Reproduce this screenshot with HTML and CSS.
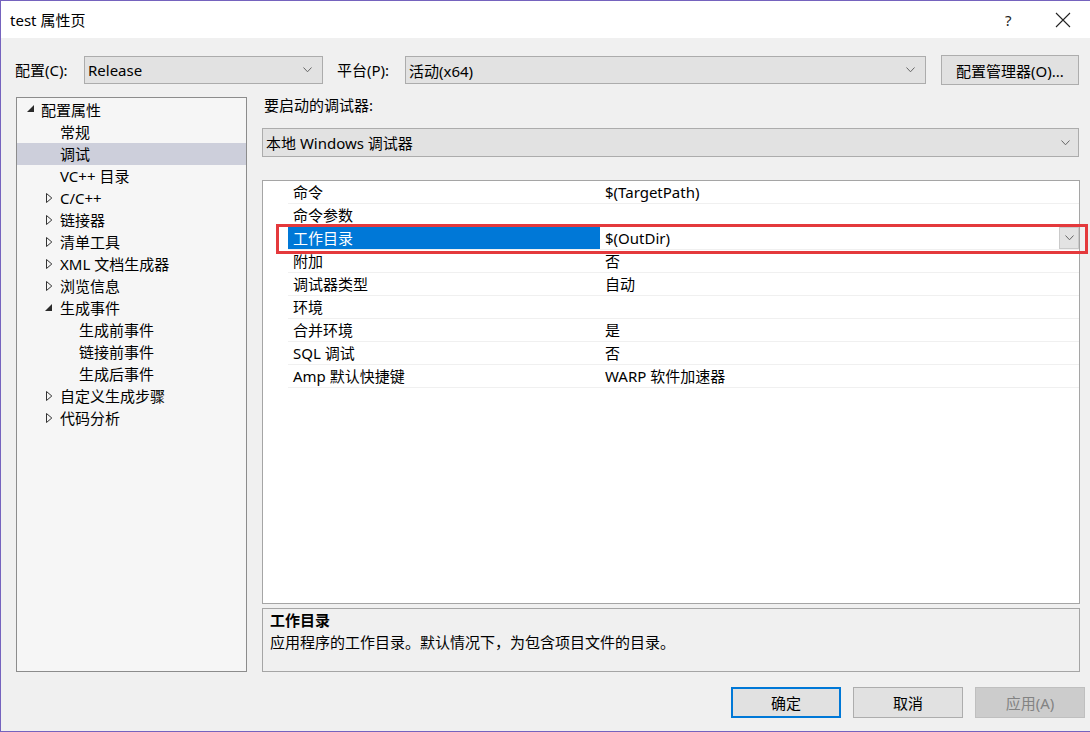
FILE: index.html
```html
<!DOCTYPE html>
<html lang="zh-CN">
<head>
  <meta charset="UTF-8">
  <title>test 属性页</title>
  <link rel="stylesheet" href="styles.css">
</head>
<body>
  <div class="window">
    <div class="titlebar">
      <span class="title">test 属性页</span>
      <span class="help">?</span>
      <span class="close">
        <svg width="16" height="16" viewBox="0 0 16 16"><path d="M1 1 L15 15 M15 1 L1 15" stroke="#222" stroke-width="1.1" fill="none"/></svg>
      </span>
    </div>

    <div class="dialog">
      <!-- Configuracion / plataforma -->
      <div class="config-bar">
        <span class="config-label">配置(C):</span>
        <div class="select sel-config">
          <span>Release</span>
          <svg class="chevron" width="9" height="6" viewBox="0 0 9 6"><path d="M0.5 0.5 L4.5 4.8 L8.5 0.5" stroke="#666" fill="none"/></svg>
        </div>
        <span class="config-label platform-label">平台(P):</span>
        <div class="select sel-platform">
          <span>活动(x64)</span>
          <svg class="chevron" width="9" height="6" viewBox="0 0 9 6"><path d="M0.5 0.5 L4.5 4.8 L8.5 0.5" stroke="#666" fill="none"/></svg>
        </div>
        <button class="btn btn-manager">配置管理器(O)...</button>
      </div>

      <div class="main">
        <!-- Arbol de propiedades -->
        <ul class="tree">
          <li class="node lvl1"><span class="toggle"><svg width="8" height="8" viewBox="0 0 8 8"><polygon points="7,0 7,7 0,7" fill="#2b2b2b"/></svg></span>配置属性</li>
          <li class="node lvl2"><span class="toggle"></span>常规</li>
          <li class="node lvl2 selected"><span class="toggle"></span>调试</li>
          <li class="node lvl2"><span class="toggle"></span>VC++ 目录</li>
          <li class="node lvl2"><span class="toggle"><svg class="tri-closed" width="7" height="10" viewBox="0 0 7 10"><polygon points="0.5,0.5 5.8,5 0.5,9.5" fill="none" stroke="#333"/></svg></span>C/C++</li>
          <li class="node lvl2"><span class="toggle"><svg class="tri-closed" width="7" height="10" viewBox="0 0 7 10"><polygon points="0.5,0.5 5.8,5 0.5,9.5" fill="none" stroke="#333"/></svg></span>链接器</li>
          <li class="node lvl2"><span class="toggle"><svg class="tri-closed" width="7" height="10" viewBox="0 0 7 10"><polygon points="0.5,0.5 5.8,5 0.5,9.5" fill="none" stroke="#333"/></svg></span>清单工具</li>
          <li class="node lvl2"><span class="toggle"><svg class="tri-closed" width="7" height="10" viewBox="0 0 7 10"><polygon points="0.5,0.5 5.8,5 0.5,9.5" fill="none" stroke="#333"/></svg></span>XML 文档生成器</li>
          <li class="node lvl2"><span class="toggle"><svg class="tri-closed" width="7" height="10" viewBox="0 0 7 10"><polygon points="0.5,0.5 5.8,5 0.5,9.5" fill="none" stroke="#333"/></svg></span>浏览信息</li>
          <li class="node lvl2"><span class="toggle"><svg width="8" height="8" viewBox="0 0 8 8"><polygon points="7,0 7,7 0,7" fill="#2b2b2b"/></svg></span>生成事件</li>
          <li class="node lvl3"><span class="toggle"></span>生成前事件</li>
          <li class="node lvl3"><span class="toggle"></span>链接前事件</li>
          <li class="node lvl3"><span class="toggle"></span>生成后事件</li>
          <li class="node lvl2"><span class="toggle"><svg class="tri-closed" width="7" height="10" viewBox="0 0 7 10"><polygon points="0.5,0.5 5.8,5 0.5,9.5" fill="none" stroke="#333"/></svg></span>自定义生成步骤</li>
          <li class="node lvl2"><span class="toggle"><svg class="tri-closed" width="7" height="10" viewBox="0 0 7 10"><polygon points="0.5,0.5 5.8,5 0.5,9.5" fill="none" stroke="#333"/></svg></span>代码分析</li>
        </ul>

        <div class="right">
          <div class="debugger-label">要启动的调试器:</div>
          <div class="select sel-debugger">
            <span>本地 Windows 调试器</span>
            <svg class="chevron" width="9" height="6" viewBox="0 0 9 6"><path d="M0.5 0.5 L4.5 4.8 L8.5 0.5" stroke="#666" fill="none"/></svg>
          </div>

          <!-- Tabla de propiedades -->
          <div class="grid">
            <div class="row"><span class="gutter"></span><span class="name">命令</span><span class="value">$(TargetPath)</span></div>
            <div class="row"><span class="gutter"></span><span class="name">命令参数</span><span class="value"></span></div>
            <div class="row active"><span class="gutter"></span><span class="name">工作目录</span><span class="value">$(OutDir)<span class="drop-btn"><svg width="9" height="6" viewBox="0 0 9 6"><path d="M0.5 0.5 L4.5 4.8 L8.5 0.5" stroke="#666" fill="none"/></svg></span></span></div>
            <div class="row"><span class="gutter"></span><span class="name">附加</span><span class="value">否</span></div>
            <div class="row"><span class="gutter"></span><span class="name">调试器类型</span><span class="value">自动</span></div>
            <div class="row"><span class="gutter"></span><span class="name">环境</span><span class="value"></span></div>
            <div class="row"><span class="gutter"></span><span class="name">合并环境</span><span class="value">是</span></div>
            <div class="row"><span class="gutter"></span><span class="name">SQL 调试</span><span class="value">否</span></div>
            <div class="row"><span class="gutter"></span><span class="name">Amp 默认快捷键</span><span class="value">WARP 软件加速器</span></div>
            <div class="mark-box"></div>
          </div>

          <div class="desc">
            <div class="desc-title">工作目录</div>
            <div class="desc-text">应用程序的工作目录。默认情况下，为包含项目文件的目录。</div>
          </div>
        </div>
      </div>

      <div class="footer">
        <button class="btn btn-ok">确定</button>
        <button class="btn">取消</button>
        <button class="btn btn-disabled">应用(A)</button>
      </div>
    </div>
  </div>
</body>
</html>
```

FILE: styles.css
```css
body {
  margin: 0;
  font-family: "Noto Sans", "Noto Sans CJK SC", sans-serif;
  font-size: 15px;
  color: #000;
  background: #f0f0f0;
}

.window {
  width: 1090px;
  height: 732px;
  box-sizing: border-box;
  border: 1px solid #7563be;
  border-right: none;
  display: flex;
  flex-direction: column;
  overflow: hidden;
}

.titlebar {
  height: 37px;
  background: #fff;
  display: flex;
  align-items: center;
  padding-left: 9px;
}

.title {
  flex: 1;
}

.help {
  width: 20px;
  margin-right: 30px;
  font-size: 15px;
  color: #222;
}

.close {
  width: 16px;
  height: 16px;
  margin-right: 19px;
}

.close svg {
  display: block;
}

.dialog {
  flex: 1;
  background: #f0f0f0;
  padding-left: 14px;
}

/* Barra de configuracion */
.config-bar {
  display: flex;
  align-items: center;
  height: 30px;
  margin-top: 17px;
}

.config-label {
  width: 69px;
  line-height: 30px;
}

.platform-label {
  margin-left: 14px;
  width: 68px;
}

.select {
  box-sizing: border-box;
  background: #e2e2e2;
  border: 1px solid #acacac;
  display: flex;
  align-items: center;
  justify-content: space-between;
  padding-left: 3px;
  padding-right: 10px;
}

.sel-config {
  width: 239px;
  height: 28px;
}

.sel-platform {
  width: 521px;
  height: 28px;
}

.btn {
  box-sizing: border-box;
  font-family: inherit;
  font-size: 15px;
  background: #e1e1e1;
  border: 1px solid #adadad;
  color: #000;
  width: 110px;
  height: 31px;
  padding: 0;
}

.btn-manager {
  margin-left: 15px;
  width: 138px;
  height: 30px;
}

.main {
  display: flex;
  margin-top: 12px;
  margin-left: 1px;
  height: 575px;
}

/* Arbol */
.tree {
  list-style: none;
  margin: 0;
  padding: 1px 0 0 0;
  width: 231px;
  box-sizing: border-box;
  border: 1px solid #8c8c8c;
  background: #f6f6f6;
}

.node {
  height: 22px;
  line-height: 22px;
  display: flex;
  align-items: center;
}

.toggle {
  width: 19px;
  height: 22px;
  display: flex;
  align-items: center;
}

.toggle svg {
  display: block;
}

.lvl1 {
  padding-left: 5px;
}

.lvl1 .toggle svg {
  margin-left: 5px;
  margin-top: -3px;
}

.lvl2 {
  padding-left: 24px;
}

.lvl2 .toggle svg {
  margin-left: 4px;
}

.lvl2 .toggle .tri-closed {
  margin-left: 5px;
}

.lvl3 {
  padding-left: 43px;
}

.node.selected {
  background: #cdcfdb;
}

.right {
  margin-left: 15px;
  width: 818px;
  display: flex;
  flex-direction: column;
}

.debugger-label {
  height: 31px;
  line-height: 16px;
  padding-left: 2px;
}

.sel-debugger {
  width: 817px;
  height: 29px;
  padding-right: 8px;
}

/* Tabla */
.grid {
  position: relative;
  margin-top: 23px;
  height: 424px;
  box-sizing: border-box;
  border: 1px solid #a5a5a5;
  background: #fff;
}

.row {
  display: flex;
  height: 23px;
  line-height: 23px;
}

.gutter {
  width: 25px;
}

.name {
  width: 312px;
  box-sizing: border-box;
  padding-left: 5px;
  border-bottom: 1px solid #f0f0f0;
}

.value {
  flex: 1;
  box-sizing: border-box;
  padding-left: 5px;
  border-bottom: 1px solid #f0f0f0;
  display: flex;
  justify-content: space-between;
}

.row.active .name {
  background: #0078d7;
  color: #fff;
}

.drop-btn {
  width: 20px;
  height: 22px;
  box-sizing: border-box;
  background: #e3e3e3;
  border: 1px solid #cacaca;
  display: flex;
  align-items: center;
  justify-content: center;
}

.mark-box {
  position: absolute;
  left: 13px;
  top: 43px;
  width: 812px;
  height: 30px;
  box-sizing: border-box;
  border: 3px solid #e4393c;
}

/* Descripcion */
.desc {
  margin-top: 4px;
  height: 64px;
  box-sizing: border-box;
  border: 1px solid #a5a5a5;
  padding-left: 7px;
  line-height: 22px;
}

.desc-title {
  font-weight: bold;
}

.footer {
  display: flex;
  justify-content: flex-end;
  gap: 12px;
  margin-top: 15px;
  padding-right: 5px;
}

.btn-ok {
  border: 2px solid #0078d7;
}

.btn-disabled {
  background: #cccccc;
  border-color: #bfbfbf;
  color: #838383;
}
```
